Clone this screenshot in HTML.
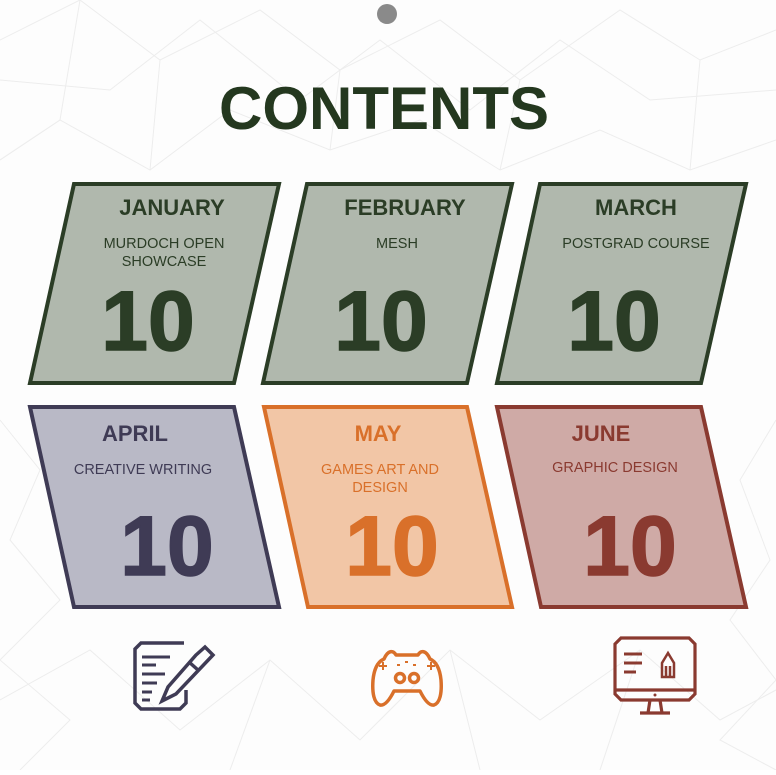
<!DOCTYPE html>
<html><head><meta charset="utf-8"><style>
html,body{margin:0;padding:0;background:#fff;}
body{width:776px;height:770px;overflow:hidden;font-family:"Liberation Sans",sans-serif;}
</style></head><body>
<svg width="776" height="770" viewBox="0 0 776 770" xmlns="http://www.w3.org/2000/svg" font-family="Liberation Sans, sans-serif">
<rect width="776" height="770" fill="#fdfdfd"/>
<g stroke="#ededed" stroke-width="1" fill="none">
<path d="M0 40 L80 0 L160 60 L260 10 L340 70 L440 20 L520 80 L620 10 L700 60 L776 30"/>
<path d="M0 160 L60 120 L150 170 L230 110 L330 150 L420 120 L500 170 L600 130 L690 170 L776 140"/>
<path d="M0 420 L40 470 L10 540 L60 600 L0 660 L70 720 L20 770"/>
<path d="M776 420 L740 480 L770 560 L730 620 L776 680 L720 740 L776 770"/>
<path d="M0 700 L90 650 L180 730 L270 660 L360 740 L450 650 L540 720 L640 650 L720 720 L776 690"/>
<path d="M80 0 L60 120 L0 160 M160 60 L150 170 M340 70 L330 150 M520 80 L500 170 M700 60 L690 170 M270 660 L230 770 M450 650 L480 770 M640 650 L600 770"/>
<path d="M0 80 L110 90 L200 20 L300 100 L380 40 L470 110 L560 40 L650 100 L776 90"/>
</g>
<circle cx="387" cy="14" r="10" fill="#8a8a8a"/>
<text x="384" y="129" text-anchor="middle" font-size="60" font-weight="bold" fill="#24381f" letter-spacing="0">CONTENTS</text>

<g stroke-width="4" stroke-linejoin="miter">
<polygon points="74,184 279,184 234,383 30,383" fill="#b0b8ad" stroke="#2b3d26"/>
<polygon points="307,184 512,184 467,383 263,383" fill="#b0b8ad" stroke="#2b3d26"/>
<polygon points="540,184 746,184 701,383 497,383" fill="#b0b8ad" stroke="#2b3d26"/>
<polygon points="30,407 234,407 279,607 74,607" fill="#b9b9c6" stroke="#3f3b55"/>
<polygon points="264,407 467,407 512,607 308,607" fill="#f2c6a6" stroke="#d9702a"/>
<polygon points="497,407 701,407 746,607 541,607" fill="#cfaaa6" stroke="#8a3a30"/>
</g>

<g text-anchor="middle" fill="#2b3d26">
<text x="172" y="215" font-size="22" font-weight="bold">JANUARY</text>
<text x="164" y="248" font-size="14.5">MURDOCH OPEN</text>
<text x="164" y="266" font-size="14.5">SHOWCASE</text>
<text x="148" y="350" font-size="84" font-weight="bold" stroke="#2b3d26" stroke-width="1.5">10</text>
<text x="405" y="215" font-size="22" font-weight="bold">FEBRUARY</text>
<text x="397" y="248" font-size="14.5">MESH</text>
<text x="381" y="350" font-size="84" font-weight="bold" stroke="#2b3d26" stroke-width="1.5">10</text>
<text x="636" y="215" font-size="22" font-weight="bold">MARCH</text>
<text x="636" y="248" font-size="14.5">POSTGRAD COURSE</text>
<text x="614" y="350" font-size="84" font-weight="bold" stroke="#2b3d26" stroke-width="1.5">10</text>
</g>
<g text-anchor="middle" fill="#3f3b55">
<text x="135" y="441" font-size="22" font-weight="bold">APRIL</text>
<text x="143" y="474" font-size="14.5">CREATIVE WRITING</text>
<text x="167" y="575" font-size="84" font-weight="bold" stroke="#3f3b55" stroke-width="1.5">10</text>
</g>
<g text-anchor="middle" fill="#d9702a">
<text x="378" y="441" font-size="22" font-weight="bold">MAY</text>
<text x="380" y="474" font-size="14.5">GAMES ART AND</text>
<text x="380" y="492" font-size="14.5">DESIGN</text>
<text x="392" y="575" font-size="84" font-weight="bold" stroke="#d9702a" stroke-width="1.5">10</text>
</g>
<g text-anchor="middle" fill="#8a3a30">
<text x="601" y="441" font-size="22" font-weight="bold">JUNE</text>
<text x="615" y="472" font-size="14.5">GRAPHIC DESIGN</text>
<text x="630" y="575" font-size="84" font-weight="bold" stroke="#8a3a30" stroke-width="1.5">10</text>
</g>

<!-- writing icon -->
<g fill="none" stroke="#3f3b55" stroke-width="3.5">
<path d="M184 643 L141 643 L135 649 L135 703 L141 709 L180 709 L186 703 L186 690"/>
<path d="M142 657 L170 657 M142 665 L156 665 M142 674 L165 674 M142 683 L157 683 M142 692 L152 692 M142 700 L150 700" stroke-width="3"/>
<path d="M196 655 L205 647 L213 655 L176 694 L162 701 L168 687 Z"/>
<path d="M189 662 L198 670"/>
</g>
<!-- gamepad -->
<g fill="none" stroke="#d9702a" stroke-width="3.5" stroke-linejoin="round">
<path d="M384 659 C377 662 374 670 373 680 C372 693 374 703 380 705 C385 706 390 699 394 691 L420 691 C424 699 429 706 434 705 C440 703 442 693 441 680 C440 670 437 662 430 659 C426 650 421 650 418 655 L396 655 C393 650 388 650 384 659 Z"/>
<circle cx="400" cy="678" r="4.5"/><circle cx="414" cy="678" r="4.5"/>
<path d="M379 666 L387 666 M383 662 L383 670 M427 666 L435 666 M431 662 L431 670 M397 665 L400 665 M405 662 L408 662 M413 665 L416 665" stroke-width="2"/>
</g>
<!-- monitor -->
<g fill="none" stroke="#8a3a30" stroke-width="3.2">
<path d="M621 638 L689 638 L695 644 L695 694 L689 700 L621 700 L615 694 L615 644 Z"/>
<path d="M615 690 L695 690 M650 700 L648 713 M660 700 L662 713 M640 713 L670 713"/>
<path d="M624 654 L642 654 M624 663 L642 663 M624 672 L636 672" stroke-width="3"/>
<path d="M662 677 L662 663 L668 653 L674 663 L674 677 Z M666 666 L666 677 M670 666 L670 677" stroke-width="2.5"/>
</g>
<circle cx="655" cy="695" r="1.5" fill="#8a3a30"/>
</svg>
</body></html>
